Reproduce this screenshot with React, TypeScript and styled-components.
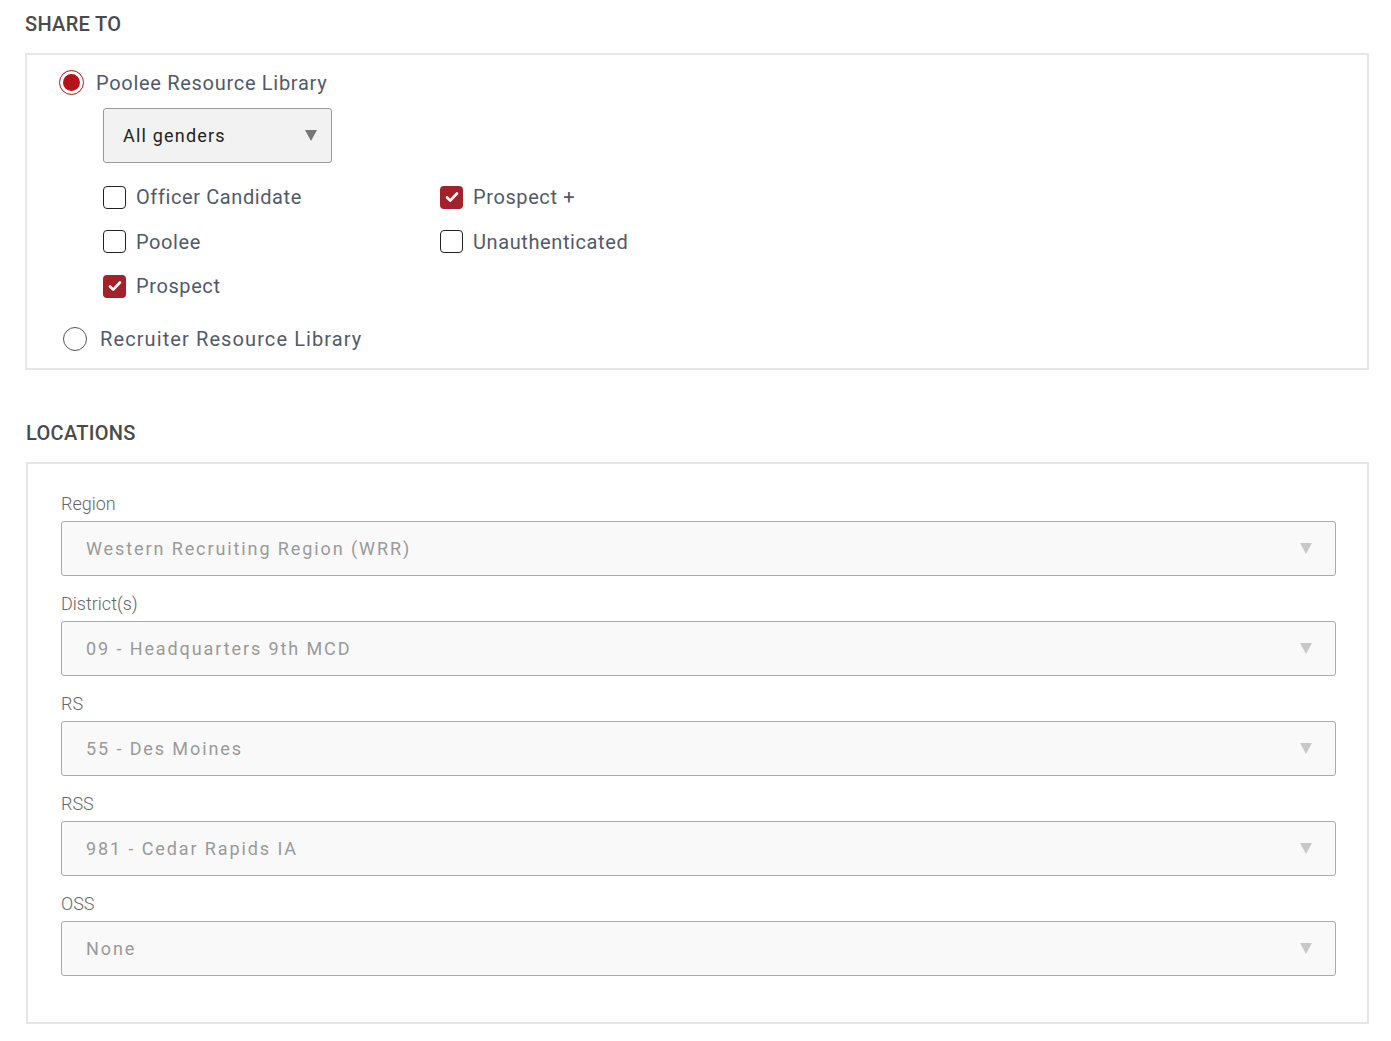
import React from "react";
import styled, { createGlobalStyle } from "styled-components";

const Global = createGlobalStyle`
  body { margin: 0; background: #fff; font-family: Roboto, "Liberation Sans", sans-serif; }
`;

const Page = styled.div`
  padding: 10px 22px 12px 25px;
`;
const Title = styled.h2`
  margin: 0 0 15px 0;
  font-size: 20px;
  font-weight: 500;
  color: #4a4a4a;
  letter-spacing: 0.3px;
  line-height: 28px;
`;
const Box = styled.div<{ $pad: string; $mb?: number }>`
  border: 2px solid #e6e6e6;
  padding: ${(p) => p.$pad};
  margin-bottom: ${(p) => p.$mb ?? 0}px;
`;
const RadioRow = styled.label<{ $ml: number; $gap: number; $ls: number }>`
  display: flex;
  align-items: center;
  gap: ${(p) => p.$gap}px;
  margin-left: ${(p) => p.$ml}px;
  font-size: 20px;
  color: #525a6a;
  letter-spacing: ${(p) => p.$ls}px;
`;
const RadioDot = styled.span<{ $on?: boolean }>`
  width: ${(p) => (p.$on ? 25 : 24)}px;
  height: ${(p) => (p.$on ? 25 : 24)}px;
  border-radius: 50%;
  box-sizing: border-box;
  border: 1.5px solid ${(p) => (p.$on ? "#b5121b" : "#555")};
  display: flex;
  align-items: center;
  justify-content: center;
  &::after {
    content: "";
    display: ${(p) => (p.$on ? "block" : "none")};
    width: 17px;
    height: 17px;
    border-radius: 50%;
    background: #b5121b;
  }
`;
const Nested = styled.div`
  margin-left: 76px;
  padding: 13px 0 8px;
`;
const Select = styled.div<{ $disabled?: boolean; $w?: string; $h: number }>`
  width: ${(p) => p.$w ?? "auto"};
  height: ${(p) => p.$h}px;
  box-sizing: border-box;
  border: 1.5px solid ${(p) => (p.$disabled ? "#aaa" : "#999")};
  border-radius: 3px;
  background: ${(p) => (p.$disabled ? "#f9f9f9" : "#f2f2f2")};
  display: flex;
  align-items: center;
  justify-content: space-between;
  padding: 0 ${(p) => (p.$disabled ? 23 : 14)}px 0 ${(p) => (p.$disabled ? 24 : 19)}px;
  font-size: 18px;
  letter-spacing: ${(p) => (p.$disabled ? 1.9 : 1.2)}px;
  color: ${(p) => (p.$disabled ? "#9a9a9a" : "#222")};
`;
const Arrow = styled.span<{ $c: string }>`
  width: 0;
  height: 0;
  border-left: 6px solid transparent;
  border-right: 6px solid transparent;
  border-top: 11px solid ${(p) => p.$c};
`;
const Grid = styled.div`
  display: grid;
  grid-template-columns: 337px 1fr;
  grid-auto-flow: column;
  grid-template-rows: repeat(3, 44.5px);
  margin-top: 22px;
`;
const CheckRow = styled.label`
  display: flex;
  align-items: center;
  gap: 10px;
  font-size: 20px;
  color: #525a6a;
  letter-spacing: 0.6px;
  height: 24px;
`;
const Box22 = styled.span<{ $on?: boolean }>`
  width: 23px;
  height: 23px;
  box-sizing: border-box;
  border-radius: 4px;
  border: ${(p) => (p.$on ? "none" : "1.5px solid #222")};
  background: ${(p) => (p.$on ? "#a3222a" : "#fff")};
  display: flex;
  align-items: center;
  justify-content: center;
`;
const Field = styled.div`
  display: flex;
  flex-direction: column;
  gap: 6px;
  & + & { margin-top: 17px; }
`;
const Label = styled.div`
  font-size: 18px;
  font-weight: 300;
  color: #666;
  line-height: 22px;
`;

const Check = ({ on, label }: { on?: boolean; label: string }) => (
  <CheckRow>
    <Box22 $on={on}>
      {on && (
        <svg width="16" height="16" viewBox="0 0 16 16">
          <path d="M3 8.5l3.2 3.2L13 4.5" stroke="#fff" strokeWidth="2.6" fill="none" strokeLinecap="round" strokeLinejoin="round" />
        </svg>
      )}
    </Box22>
    {label}
  </CheckRow>
);

const fields = [
  ["Region", "Western Recruiting Region (WRR)"],
  ["District(s)", "09 - Headquarters 9th MCD"],
  ["RS", "55 - Des Moines"],
  ["RSS", "981 - Cedar Rapids IA"],
  ["OSS", "None"],
];

export default function App() {
  return (
    <Page>
      <Global />
      <Title>SHARE TO</Title>
      <Box $pad="15px 0 17px 0" $mb={49}>
        <RadioRow $ml={32} $gap={12} $ls={0.7}>
          <RadioDot $on />
          Poolee Resource Library
        </RadioRow>
        <Nested>
          <Select $w="229px" $h={55}>
            All genders
            <Arrow $c="#777" />
          </Select>
          <Grid>
            <Check label="Officer Candidate" />
            <Check label="Poolee" />
            <Check on label="Prospect" />
            <Check on label="Prospect +" />
            <Check label="Unauthenticated" />
          </Grid>
        </Nested>
        <RadioRow $ml={36} $gap={13} $ls={1.1}>
          <RadioDot />
          Recruiter Resource Library
        </RadioRow>
      </Box>
      <Title style={{ marginLeft: 1 }}>LOCATIONS</Title>
      <Box $pad="29px 31px 46px 33px" style={{ marginLeft: 1 }}>
        {fields.map(([l, v]) => (
          <Field key={l}>
            <Label>{l}</Label>
            <Select $disabled $h={55}>
              {v}
              <Arrow $c="#c8c8c8" />
            </Select>
          </Field>
        ))}
      </Box>
    </Page>
  );
}
